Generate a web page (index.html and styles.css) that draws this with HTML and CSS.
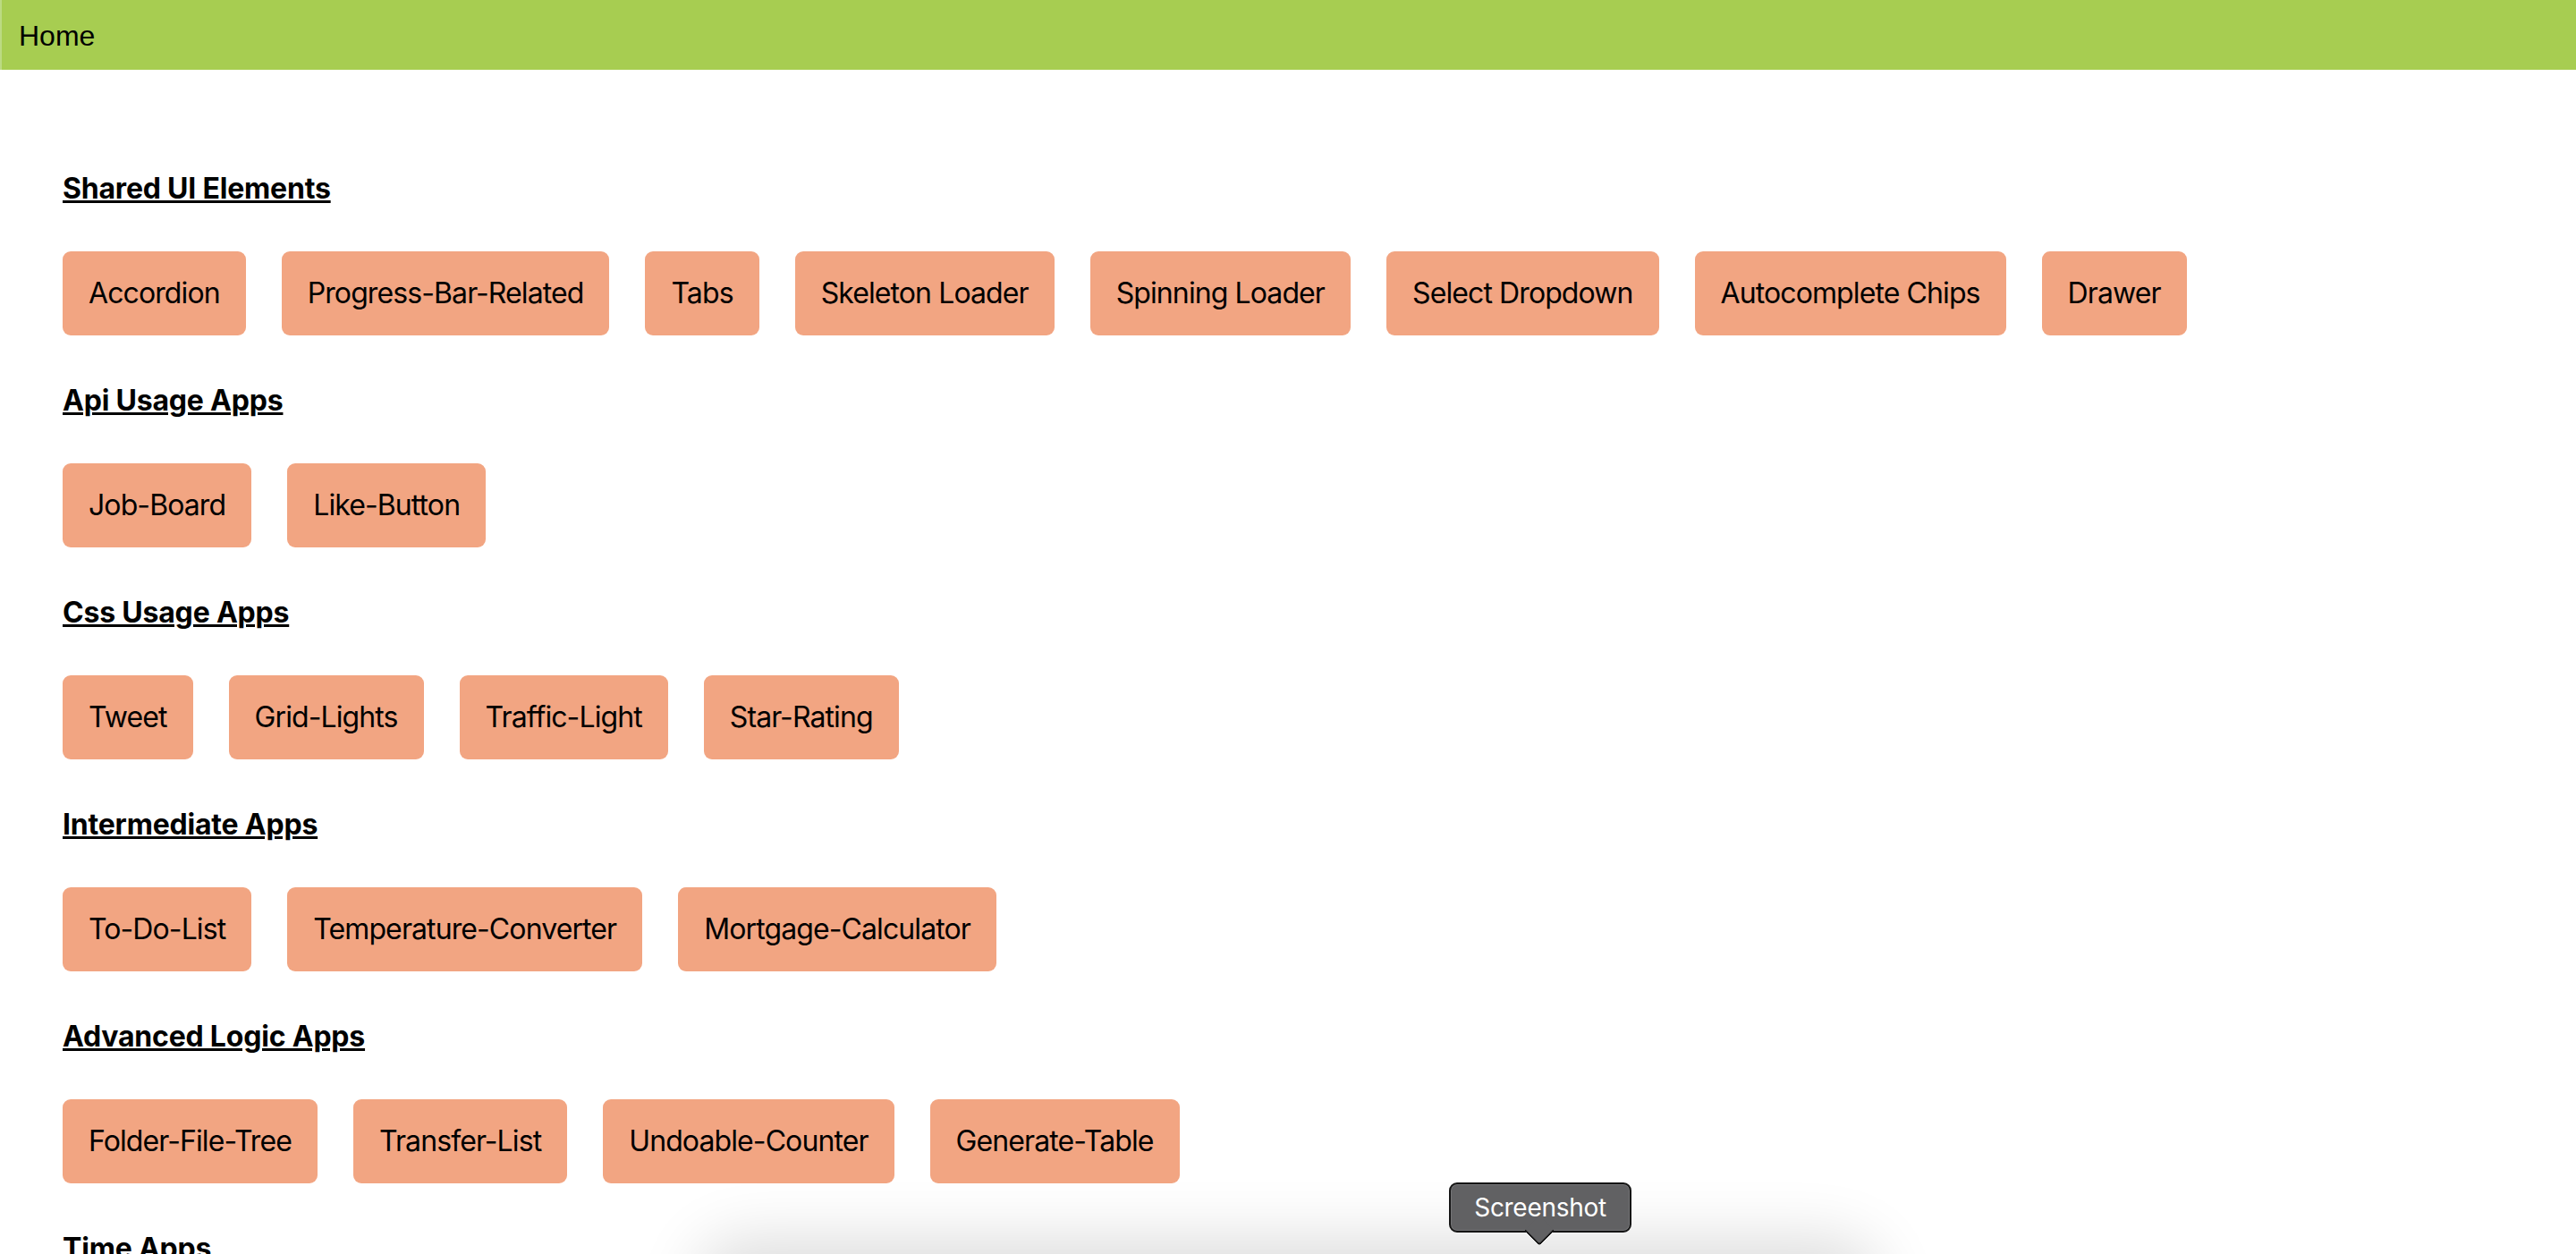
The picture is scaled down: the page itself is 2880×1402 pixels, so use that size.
FILE: index.html
```html
<!DOCTYPE html>
<html lang="en">
<head>
    <meta charset="UTF-8">
    <meta name="viewport" content="width=device-width, initial-scale=1.0">
    <title>Home</title>
    <link rel="stylesheet" href="styles.css">
</head>
<body>
    <header class="topbar">
        <span class="topbar-title">Home</span>
    </header>

    <main class="content">
        <section class="group">
            <h2 class="group-title">Shared UI Elements</h2>
            <div class="group-links">
                <a class="app-link" href="#">Accordion</a>
                <a class="app-link" href="#">Progress-Bar-Related</a>
                <a class="app-link" href="#">Tabs</a>
                <a class="app-link" href="#">Skeleton Loader</a>
                <a class="app-link" href="#">Spinning Loader</a>
                <a class="app-link" href="#">Select Dropdown</a>
                <a class="app-link" href="#">Autocomplete Chips</a>
                <a class="app-link" href="#">Drawer</a>
            </div>
        </section>

        <section class="group">
            <h2 class="group-title">Api Usage Apps</h2>
            <div class="group-links">
                <a class="app-link" href="#">Job-Board</a>
                <a class="app-link" href="#">Like-Button</a>
            </div>
        </section>

        <section class="group">
            <h2 class="group-title">Css Usage Apps</h2>
            <div class="group-links">
                <a class="app-link" href="#">Tweet</a>
                <a class="app-link" href="#">Grid-Lights</a>
                <a class="app-link" href="#">Traffic-Light</a>
                <a class="app-link" href="#">Star-Rating</a>
            </div>
        </section>

        <section class="group">
            <h2 class="group-title">Intermediate Apps</h2>
            <div class="group-links">
                <a class="app-link" href="#">To-Do-List</a>
                <a class="app-link" href="#">Temperature-Converter</a>
                <a class="app-link" href="#">Mortgage-Calculator</a>
            </div>
        </section>

        <section class="group">
            <h2 class="group-title">Advanced Logic Apps</h2>
            <div class="group-links">
                <a class="app-link" href="#">Folder-File-Tree</a>
                <a class="app-link" href="#">Transfer-List</a>
                <a class="app-link" href="#">Undoable-Counter</a>
                <a class="app-link" href="#">Generate-Table</a>
            </div>
        </section>

        <section class="group">
            <h2 class="group-title">Time Apps</h2>
            <div class="group-links">
                <a class="app-link" href="#">Clock</a>
                <a class="app-link" href="#">Stopwatch</a>
                <a class="app-link" href="#">Countdown-Timer</a>
            </div>
        </section>
    </main>

    <!-- capture toolbar shadow and its hover tip -->
    <div class="capture-shadow"></div>
    <div class="capture-tip">Screenshot</div>
</body>
</html>
```

FILE: styles.css
```css
body {
    margin: 0;
    font-family: Inter, "Noto Sans", sans-serif;
    color: #000;
    background-color: #fff;
}
.topbar {
    box-sizing: border-box;
    height: 78px;
    padding: 22px 21px 0 19px;
    background-color: #a7cd51;
    border-left: 2px solid #bcdb83;
    font-family: "Liberation Sans", Arial, sans-serif;
    font-size: 32px;
    line-height: 37px;
}
.content {
    display: flex;
    flex-direction: column;
    gap: 53px;
    padding: 113px 70px 40px;
}
.group {
    display: flex;
    flex-direction: column;
    gap: 51px;
}
.group-title {
    margin: 0;
    font-size: 32px;
    font-weight: 700;
    line-height: 39px;
    letter-spacing: -0.2px;
    text-decoration: underline;
    text-decoration-thickness: 3px;
    text-underline-offset: 2px;
}
.group-links {
    display: flex;
    flex-wrap: wrap;
    gap: 40px;
}
.app-link {
    padding: 28px 29px;
    background-color: #f2a582;
    color: #000;
    border-radius: 9px;
    font-size: 32px;
    line-height: 38px;
    letter-spacing: -0.9px;
    text-decoration: none;
}
.capture-shadow {
    position: fixed;
    left: 790px;
    bottom: -120px;
    width: 1300px;
    height: 120px;
    border-radius: 40px;
    box-shadow: 0 -6px 70px 10px rgba(0, 0, 0, 0.14);
    pointer-events: none;
}
.capture-tip {
    position: fixed;
    left: 1620px;
    top: 1322px;
    box-sizing: border-box;
    width: 204px;
    height: 56px;
    padding-top: 9px;
    background-color: #616163;
    border: 2px solid #151515;
    border-radius: 9px;
    box-shadow: inset 0 0 0 1px rgba(255, 255, 255, 0.12);
    color: #fff;
    font-size: 28px;
    line-height: 34px;
    letter-spacing: -0.3px;
    text-align: center;
}
.capture-tip::after {
    content: "";
    position: absolute;
    left: 87px;
    bottom: -16px;
    width: 22px;
    height: 22px;
    background-color: #616163;
    border-right: 2px solid #151515;
    border-bottom: 2px solid #151515;
    border-bottom-right-radius: 4px;
    transform: translateY(-4px) rotate(45deg);
    transform-origin: center;
}
```
